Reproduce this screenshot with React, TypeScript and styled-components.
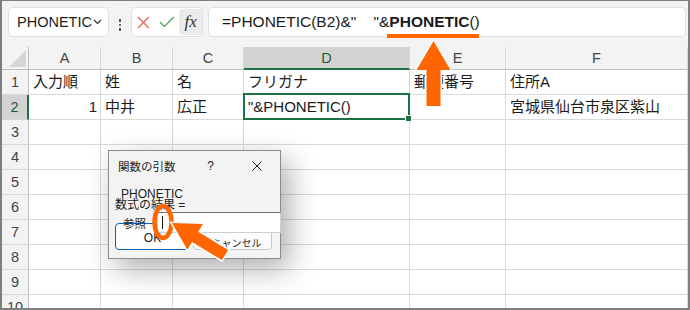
import React from "react"
import styled, { createGlobalStyle } from "styled-components"

const GlobalStyle = createGlobalStyle`
  html, body {
    margin: 0;
    padding: 0;
    background: #ffffff;
  }
  body {
    font-family: "Liberation Sans", "Noto Sans CJK JP", sans-serif;
  }
`

const ORANGE = "#ff6600"
const GREEN = "#1e7145"

const Frame = styled.div`
  position: relative;
  width: 690px;
  height: 310px;
  box-sizing: border-box;
  border: 2px solid #7f7f7f;
  border-top-width: 1px;
  overflow: hidden;
  background: #ffffff;
`

const Toolbar = styled.div`
  display: flex;
  align-items: flex-start;
  height: 46px;
  box-sizing: border-box;
  padding: 6px 2px 0 6px;
  background: #f3f3f3;
`

const NameBox = styled.div`
  display: flex;
  align-items: center;
  justify-content: space-between;
  width: 101px;
  height: 30px;
  box-sizing: border-box;
  padding: 0 6px 0 8px;
  background: #ffffff;
  border: 1px solid #e0e0e0;
  border-radius: 5px;
  font-size: 14.5px;
  color: #222222;
`

const Dots = styled.div`
  display: flex;
  flex-direction: column;
  gap: 2px;
  margin: 12px 9px 0 9px;
  width: 4px;
  align-items: center;

  span {
    width: 2.5px;
    height: 2.5px;
    border-radius: 50%;
    background: #3a3a3a;
  }
`

const FxBox = styled.div`
  display: flex;
  align-items: center;
  width: 72px;
  height: 30px;
  box-sizing: border-box;
  padding: 0 0 0 5px;
  background: #ffffff;
  border: 1px solid #e0e0e0;
  border-radius: 5px;
`

const FxButton = styled.div`
  display: flex;
  align-items: center;
  justify-content: center;
  width: 23px;
  height: 26px;
  margin-left: 5px;
  border-radius: 3px;
  background: #ebebeb;
  font-family: "Liberation Serif", serif;
  font-style: italic;
  font-size: 17px;
  color: #333333;
`

const FormulaBar = styled.div`
  flex: 1;
  display: flex;
  align-items: center;
  height: 30px;
  margin-left: 5px;
  box-sizing: border-box;
  padding-left: 13px;
  background: #ffffff;
  border: 1px solid #e0e0e0;
  border-radius: 5px;
  font-size: 15.5px;
  color: #1a1a1a;
  white-space: pre;
`

const Sheet = styled.div`
  display: grid;
  grid-template-columns: 27px 72px 72px 71px 166px 96px 1fr;
  grid-template-rows: 23px;
  grid-auto-rows: 25px;
`

const Corner = styled.div`
  background: #f3f3f3;
  border-right: 1px solid #bdbdbd;
  border-bottom: 1px solid #bdbdbd;
  display: flex;
  align-items: flex-end;
  justify-content: flex-end;
  padding: 0 2px 2px 0;

  &::after {
    content: "";
    width: 0;
    height: 0;
    border-left: 17px solid transparent;
    border-bottom: 17px solid #d6d6d6;
  }
`

const ColHead = styled.div<{ $active?: boolean }>`
  display: flex;
  align-items: center;
  justify-content: center;
  background: ${(p) => (p.$active ? "#d3d3d3" : "#f3f3f3")};
  border-right: 1px solid #d9d9d9;
  border-bottom: ${(p) => (p.$active ? `2px solid ${GREEN}` : "1px solid #bdbdbd")};
  font-size: 14.5px;
  color: ${(p) => (p.$active ? "#1d5e39" : "#444444")};
`

const RowHead = styled.div<{ $active?: boolean }>`
  display: flex;
  align-items: center;
  justify-content: center;
  background: ${(p) => (p.$active ? "#d3d3d3" : "#f3f3f3")};
  border-right: ${(p) => (p.$active ? `2px solid ${GREEN}` : "1px solid #bdbdbd")};
  border-bottom: 1px solid #d9d9d9;
  font-size: 14.5px;
  color: ${(p) => (p.$active ? "#1d5e39" : "#444444")};
`

const Cell = styled.div<{ $right?: boolean; $active?: boolean }>`
  position: relative;
  display: flex;
  align-items: center;
  justify-content: ${(p) => (p.$right ? "flex-end" : "flex-start")};
  padding: 0 3px 0 4px;
  border-right: 1px solid #d9d9d9;
  border-bottom: 1px solid #d9d9d9;
  font-size: 15px;
  line-height: 18px;
  color: #1a1a1a;
  white-space: nowrap;

  ${(p) =>
    p.$active &&
    `
    &::after {
      content: "";
      position: absolute;
      top: -2px;
      left: -1px;
      right: -1px;
      bottom: -1px;
      border: 2px solid ${GREEN};
      z-index: 2;
    }
    &::before {
      content: "";
      position: absolute;
      right: -3px;
      bottom: -3px;
      width: 5px;
      height: 5px;
      background: ${GREEN};
      border: 1px solid #ffffff;
      z-index: 3;
    }
  `}
`

const Dialog = styled.div`
  position: absolute;
  left: 106px;
  top: 149px;
  width: 173px;
  height: 109px;
  box-sizing: border-box;
  background: #f3f3f3;
  border: 1px solid #8c8c8c;
  box-shadow: 8px 10px 28px rgba(0, 0, 0, 0.32);
  z-index: 5;
  color: #1e1e1e;
`

const TitleBar = styled.div`
  display: flex;
  align-items: center;
  height: 30px;
  padding: 0 18px 0 9px;
  font-size: 11.5px;
`

const TitleText = styled.div`
  flex: 1;
`

const Help = styled.div`
  font-size: 12px;
  margin-right: 38px;
`

const DialogBody = styled.div`
  display: flex;
  flex-direction: column;
  padding-left: 12px;
`

const FuncName = styled.div`
  margin-top: 6px;
  font-size: 12px;
  line-height: 14px;
`

const ResultLine = styled.div`
  margin: -2px 0 0 -6px;
  font-size: 12px;
  line-height: 12px;
`

const RefRow = styled.div`
  position: relative;
  z-index: 2;
  display: flex;
  align-items: center;
  height: 21px;
  margin-top: 1px;
  margin-right: -1px;
`

const RefLabel = styled.div`
  margin-left: 2px;
  width: 34px;
  font-size: 11.5px;
`

const RefInput = styled.div`
  flex: 1;
  height: 21px;
  box-sizing: border-box;
  display: flex;
  align-items: center;
  padding-left: 4px;
  background: #ffffff;
  border: 1px solid #cfcfcf;
  border-top-color: #707070;

  &::before {
    content: "";
    width: 1px;
    height: 13px;
    background: #111111;
  }
`

const ButtonRow = styled.div`
  position: relative;
  z-index: 1;
  display: flex;
  align-items: flex-end;
  margin: -10px 0 0 -6px;
`

const DialogButton = styled.div<{ $primary?: boolean; $w: number; $h: number }>`
  display: flex;
  align-items: center;
  justify-content: center;
  width: ${(p) => p.$w}px;
  height: ${(p) => p.$h}px;
  box-sizing: border-box;
  margin-right: 3px;
  padding-top: ${(p) => (p.$primary ? 2 : 5)}px;
  padding-left: ${(p) => (p.$primary ? 0 : 8)}px;
  background: #fdfdfd;
  border: 1px solid ${(p) => (p.$primary ? "#0067c0" : "#c8c8c8")};
  border-radius: 4px;
  font-size: ${(p) => (p.$primary ? 12 : 10)}px;
  color: #1e1e1e;
`

const Overlay = styled.svg`
  position: absolute;
  left: -2px;
  top: -1px;
  z-index: 10;
  pointer-events: none;
`

const arrowPoints = (
  tx: number,
  ty: number,
  hx: number,
  hy: number,
  headLen: number,
  headHalf: number,
  shaftHalf: number
) => {
  const dx = hx - tx
  const dy = hy - ty
  const len = Math.hypot(dx, dy)
  const ux = dx / len
  const uy = dy / len
  const nx = -uy
  const ny = ux
  const bx = hx - ux * headLen
  const by = hy - uy * headLen
  const pts = [
    [tx + nx * shaftHalf, ty + ny * shaftHalf],
    [bx + nx * shaftHalf, by + ny * shaftHalf],
    [bx + nx * headHalf, by + ny * headHalf],
    [hx, hy],
    [bx - nx * headHalf, by - ny * headHalf],
    [bx - nx * shaftHalf, by - ny * shaftHalf],
    [tx - nx * shaftHalf, ty - ny * shaftHalf],
  ]
  return pts.map(([x, y]) => `${x.toFixed(1)},${y.toFixed(1)}`).join(" ")
}

const columns = ["A", "B", "C", "D", "E", "F"]

const rows: { text: string; right?: boolean }[][] = [
  [
    { text: "入力順" },
    { text: "姓" },
    { text: "名" },
    { text: "フリガナ" },
    { text: "郵便番号" },
    { text: "住所A" },
  ],
  [
    { text: "1", right: true },
    { text: "中井" },
    { text: "広正" },
    { text: "\"&PHONETIC()" },
    { text: "" },
    { text: "宮城県仙台市泉区紫山" },
  ],
]

export default function App() {
  const rowCount = 10
  return (
    <>
      <GlobalStyle />
      <Frame>
        <Toolbar>
          <NameBox>
            <span>PHONETIC</span>
            <svg width="9" height="6" viewBox="0 0 9 6">
              <path d="M1 1 L4.5 4.5 L8 1" fill="none" stroke="#333" strokeWidth="1.2" />
            </svg>
          </NameBox>
          <Dots>
            <span />
            <span />
            <span />
          </Dots>
          <FxBox>
            <svg width="13" height="13" viewBox="0 0 13 13">
              <path d="M1 1 L12 12 M12 1 L1 12" stroke="#e8675d" strokeWidth="1.4" />
            </svg>
            <svg width="16" height="12" viewBox="0 0 16 12" style={{ marginLeft: 9 }}>
              <path d="M1 6 L5.5 10.5 L15 1" fill="none" stroke="#52a962" strokeWidth="1.4" />
            </svg>
            <FxButton>fx</FxButton>
          </FxBox>
          <FormulaBar>
            {"=PHONETIC(B2)&\"    \"&"}
            <b>PHONETIC</b>
            {"()"}
          </FormulaBar>
        </Toolbar>

        <Sheet>
          <Corner />
          {columns.map((c) => (
            <ColHead key={c} $active={c === "D"}>
              {c}
            </ColHead>
          ))}
          {Array.from({ length: rowCount }, (_, r) => (
            <React.Fragment key={r}>
              <RowHead $active={r === 1}>{r + 1}</RowHead>
              {columns.map((c, ci) => {
                const data = rows[r]?.[ci]
                return (
                  <Cell key={c} $right={data?.right} $active={r === 1 && c === "D"}>
                    {data?.text}
                  </Cell>
                )
              })}
            </React.Fragment>
          ))}
        </Sheet>

        <Dialog>
          <TitleBar>
            <TitleText>関数の引数</TitleText>
            <Help>?</Help>
            <svg width="10" height="10" viewBox="0 0 10 10">
              <path d="M0.5 0.5 L9.5 9.5 M9.5 0.5 L0.5 9.5" stroke="#222" strokeWidth="1" />
            </svg>
          </TitleBar>
          <DialogBody>
            <FuncName>PHONETIC</FuncName>
            <ResultLine>数式の結果 =</ResultLine>
            <RefRow>
              <RefLabel>参照</RefLabel>
              <RefInput />
            </RefRow>
            <ButtonRow>
              <DialogButton $primary $w={75} $h={27}>
                OK
              </DialogButton>
              <DialogButton $w={79} $h={20}>
                キャンセル
              </DialogButton>
            </ButtonRow>
          </DialogBody>
        </Dialog>

        <Overlay width="690" height="310" viewBox="0 0 690 310">
          <rect x="387" y="34" width="92" height="4" fill={ORANGE} />
          <polygon
            points={arrowPoints(433.5, 106, 433.5, 41, 29, 17, 7)}
            fill={ORANGE}
            stroke="#ffffff"
            strokeWidth="3"
            paintOrder="stroke"
          />
          <ellipse cx="163" cy="222" rx="8.5" ry="16" fill="none" stroke={ORANGE} strokeWidth="4.5" />
          <polygon
            points={arrowPoints(225, 255, 172, 223, 27, 15, 6)}
            fill={ORANGE}
            stroke="#ffffff"
            strokeWidth="3"
            paintOrder="stroke"
          />
        </Overlay>
      </Frame>
    </>
  )
}
